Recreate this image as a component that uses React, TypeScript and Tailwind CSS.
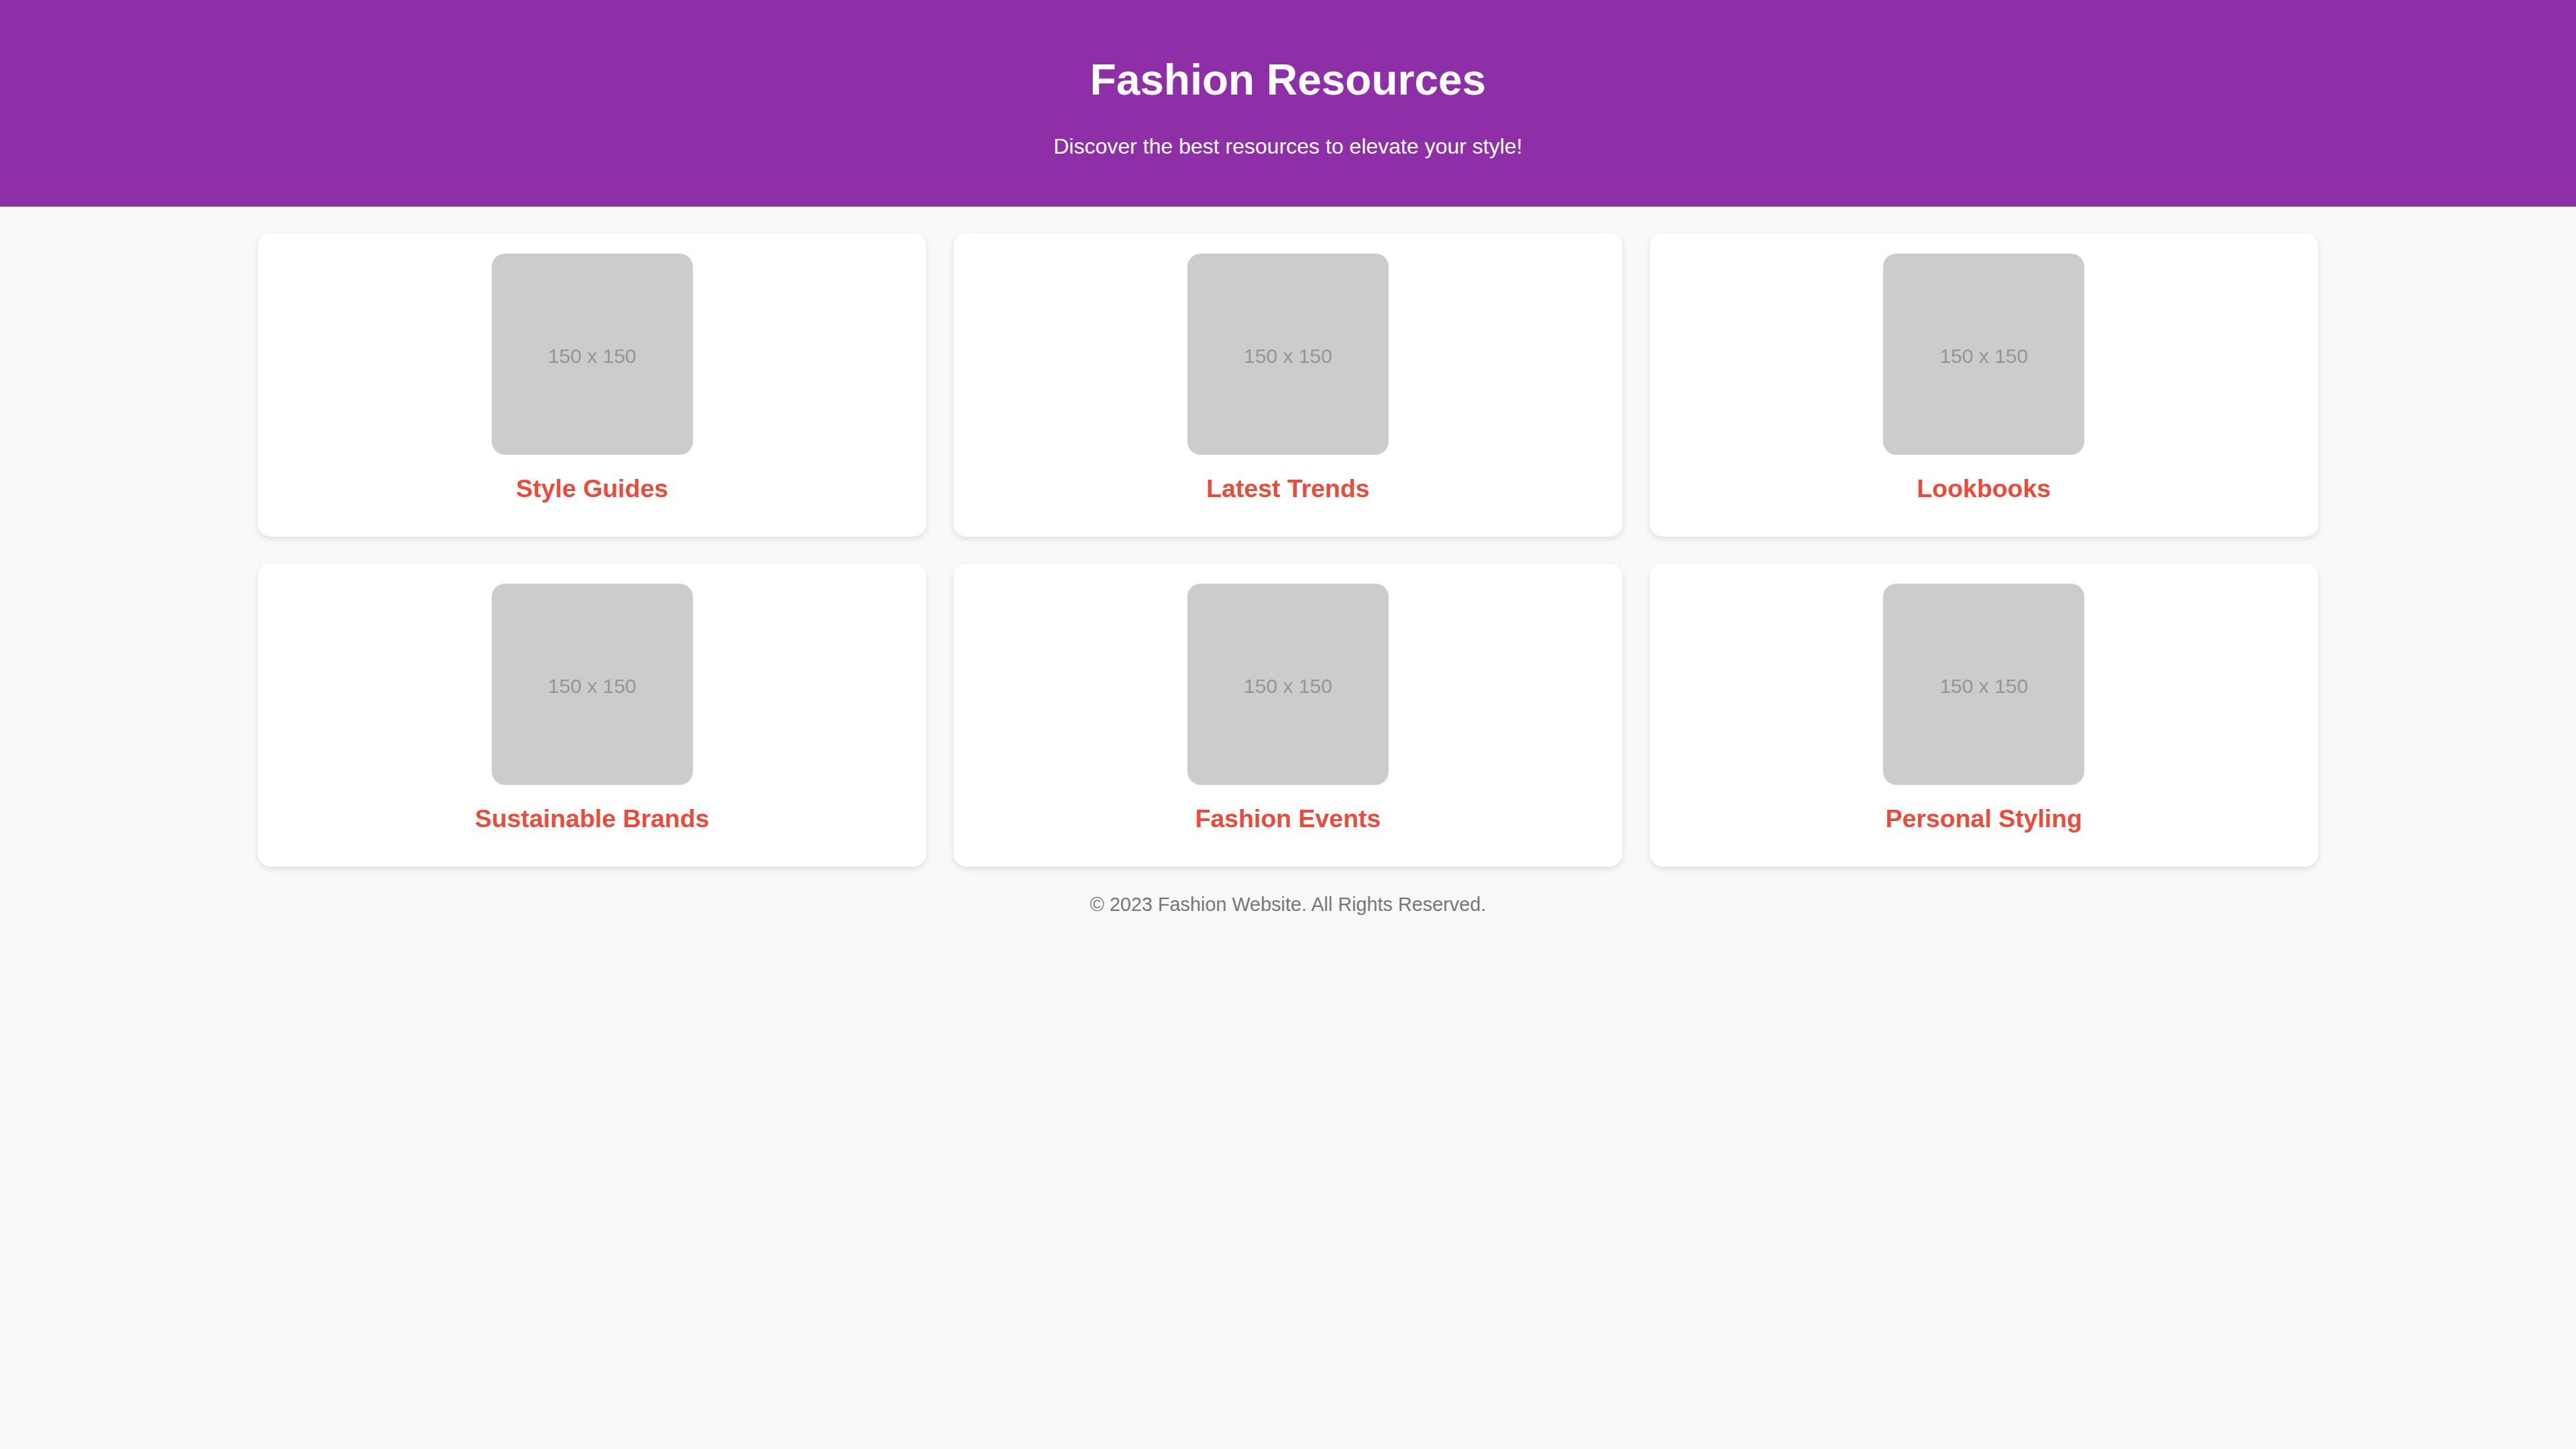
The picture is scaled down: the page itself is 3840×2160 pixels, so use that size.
import React from "react";

const resources = [
  "Style Guides",
  "Latest Trends",
  "Lookbooks",
  "Sustainable Brands",
  "Fashion Events",
  "Personal Styling",
];

function Placeholder() {
  return (
    <div className="w-[300px] h-[300px] rounded-[20px] bg-[#cccccc] flex items-center justify-center pt-[6px] text-[30px] leading-[1.15] text-[#969696]">
      150 x 150
    </div>
  );
}

export default function App() {
  return (
    <div className="min-h-screen bg-[#f9f9f9] font-['Liberation_Sans',Arial,sans-serif] leading-[1.15]">
      {/* Header */}
      <header className="bg-[#8e2fa8] text-white text-center py-[40px]">
        <h1 className="text-[64px] font-bold leading-[1.15] mt-[43px] mb-[43px]">Fashion Resources</h1>
        <p className="text-[32px] leading-[1.15] mb-[32px]">Discover the best resources to elevate your style!</p>
      </header>

      {/* Resource grid */}
      <div className="w-[80%] mx-auto mt-[40px] grid grid-cols-3 gap-[40px]">
        {resources.map((name) => (
          <div
            key={name}
            className="bg-white rounded-[20px] shadow-[0_4px_10px_rgba(0,0,0,0.1)] p-[30px] flex flex-col items-center"
          >
            <Placeholder />
            <h3 className="text-[37.44px] font-bold leading-[43px] text-[#e74c3c] mt-[29px] mb-[20px]">{name}</h3>
          </div>
        ))}
      </div>

      <footer className="text-center text-[28.8px] leading-[1.15] text-[#777777] pt-[40px]">
        © 2023 Fashion Website. All Rights Reserved.
      </footer>
    </div>
  );
}
